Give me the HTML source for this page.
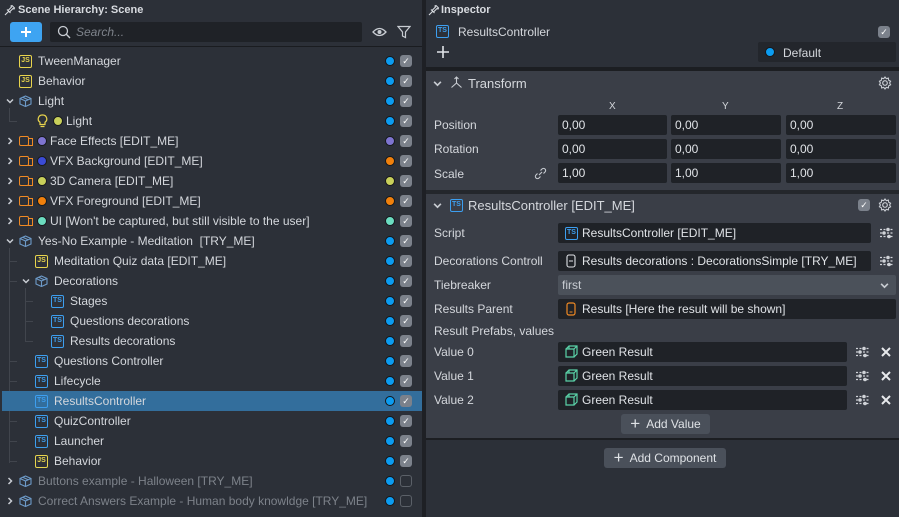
<!DOCTYPE html>
<html><head><meta charset="utf-8"><style>
*{box-sizing:border-box;margin:0;padding:0}
body{width:899px;height:517px;overflow:hidden;background:#1e2025;font-family:"Liberation Sans",sans-serif;font-size:12px;color:#d4d7dc;position:relative}
.a{position:absolute}
.lp{left:0;top:0;width:422px;height:517px;background:#2c3038}
.row{position:absolute;left:0;width:422px;height:20px;line-height:20px;white-space:nowrap}
.row .t{position:absolute;top:0}
.ic{position:absolute;top:4px;width:13px;height:13px;border:1.2px solid;border-radius:2px;font-size:7px;line-height:10px;text-align:center;font-weight:bold}
.js{border-color:#e8d44d;color:#e8d44d}
.ts{border-color:#3d9ff0;color:#3d9ff0}
.arr{position:absolute;top:6px;width:8px;height:8px}
.dot{position:absolute;top:5px;width:10px;height:10px;border-radius:50%;border:1px solid #15171b}
.bd{left:385px;background:#0c9cf0}
.cb{position:absolute;left:400px;top:4px;width:12px;height:12px;border-radius:3px;background:#7b818b;color:#fff;font-size:9px;line-height:12px;text-align:center}
.cbo{background:none;border:1.5px solid #5b6068}
.cam{position:absolute;top:5px;width:10px;height:10px;border:1.3px solid #f08a24;border-radius:2px}
.cam:after{content:"";position:absolute;left:8px;top:1px;width:4px;height:6px;border:1.3px solid #f08a24;border-left:none}
.grp{position:absolute;top:4px;width:13px;height:12px}
.ln{position:absolute;background:#41454d}
.in{position:absolute;background:#1f2227;height:20px;line-height:20px;padding-left:4px;border-radius:2px;white-space:nowrap;color:#e0e3e7}
.lbl{position:absolute;white-space:nowrap;color:#d4d7dc}
.btn{position:absolute;background:#4a505a;border-radius:3px;height:20px;line-height:20px;color:#dfe2e6;text-align:center}
</style></head><body>
<svg width="0" height="0" style="position:absolute"><defs>
<symbol id="grp" viewBox="0 0 13 12"><path d="M6.5 1 L12 3.5 V9 L6.5 11.5 L1 9 V3.5 Z M1 3.5 L6.5 6 L12 3.5 M6.5 6 V11.5 M3.7 2.2 L9.2 4.7" fill="none" stroke="#6d9ac8" stroke-width="1.1"/></symbol>
<symbol id="gear" viewBox="0 0 14 14"><circle cx="7" cy="7" r="2.3" fill="none" stroke="#c8ccd2" stroke-width="1.2"/><path d="M7 1 L8.3 2.6 L10.4 2.1 L10.6 4.2 L12.6 5.2 L11.6 7 L12.6 8.8 L10.6 9.8 L10.4 11.9 L8.3 11.4 L7 13 L5.7 11.4 L3.6 11.9 L3.4 9.8 L1.4 8.8 L2.4 7 L1.4 5.2 L3.4 4.2 L3.6 2.1 L5.7 2.6 Z" fill="none" stroke="#c8ccd2" stroke-width="1.1"/></symbol>
<symbol id="sld" viewBox="0 0 16 12"><path d="M1 2.5H15M1 6H15M1 9.5H15" stroke="#d0d3d8" stroke-width="1.3" stroke-dasharray="2 1.5"/><circle cx="9" cy="2.5" r="1.8" fill="#d0d3d8"/><circle cx="5" cy="6" r="1.8" fill="#d0d3d8"/><circle cx="10" cy="9.5" r="1.8" fill="#d0d3d8"/></symbol>
<symbol id="pre" viewBox="0 0 13 13"><path d="M1 4 H9 V12 H1 Z M1 4 L4 1 H12 V9 L9 12 M9 4 L12 1 M4 1 V4" fill="none" stroke="#5ad3a8" stroke-width="1.2"/></symbol>
<symbol id="ar" viewBox="0 0 8 8"><path d="M2.5 1L5.5 4L2.5 7" fill="none" stroke="#c8ccd2" stroke-width="1.5"/></symbol>
<symbol id="ad" viewBox="0 0 8 8"><path d="M1 2.5L4 5.5L7 2.5" fill="none" stroke="#c8ccd2" stroke-width="1.5"/></symbol>
<symbol id="pin" viewBox="0 0 12 12"><path d="M1 11L4.5 7.5M3 5.5L6.5 9M4 6.5L7.5 3L7 2L8 1.5L10.5 4L10 5L9 4.5L5.5 8" fill="none" stroke="#d8dbe0" stroke-width="1.1"/></symbol>
</defs></svg>

<!-- LEFT PANEL -->
<div class="a lp"></div>
<svg class="a" style="left:4px;top:4px" width="12" height="12"><use href="#pin"/></svg>
<div class="a" style="left:18px;top:4px;font-size:11px;font-weight:bold;color:#d8dbe0">Scene Hierarchy: Scene</div>
<div class="a" style="left:10px;top:22px;width:32px;height:20px;background:#3ea4f2;border-radius:3px"></div>
<svg class="a" style="left:20px;top:26px" width="12" height="12"><path d="M6 1V11M1 6H11" stroke="#fff" stroke-width="2"/></svg>
<div class="a" style="left:50px;top:22px;width:312px;height:20px;background:#1f2227;border-radius:2px"></div>
<svg class="a" style="left:57px;top:25px" width="14" height="14"><circle cx="6" cy="6" r="4.5" fill="none" stroke="#c8ccd2" stroke-width="1.3"/><path d="M9.3 9.3L13 13" stroke="#c8ccd2" stroke-width="1.4"/></svg>
<div class="a" style="left:76px;top:25px;font-style:italic;color:#7e838b">Search...</div>
<svg class="a" style="left:372px;top:26px" width="15" height="12"><path d="M1 6 Q7.5 -1 14 6 Q7.5 13 1 6Z" fill="none" stroke="#c8ccd2" stroke-width="1.3"/><circle cx="7.5" cy="6" r="2" fill="#c8ccd2"/></svg>
<svg class="a" style="left:397px;top:25px" width="14" height="14"><path d="M1 1.5H13L8.5 7V12.5L5.5 11V7Z" fill="none" stroke="#c8ccd2" stroke-width="1.2"/></svg>
<div class="a" style="left:0;top:46px;width:422px;height:1px;background:#1a1c20"></div>

<!-- tree lines -->
<div class="ln" style="left:9px;top:108px;width:1px;height:14px"></div><div class="ln" style="left:9px;top:121px;width:8px;height:1px"></div>
<div class="ln" style="left:9px;top:248px;width:1px;height:215px"></div>
<div class="ln" style="left:10px;top:261px;width:7px;height:1px"></div>
<div class="ln" style="left:10px;top:281px;width:7px;height:1px"></div>
<div class="ln" style="left:25px;top:288px;width:1px;height:54px"></div>
<div class="ln" style="left:26px;top:301px;width:7px;height:1px"></div>
<div class="ln" style="left:26px;top:321px;width:7px;height:1px"></div>
<div class="ln" style="left:26px;top:341px;width:7px;height:1px"></div>
<div class="ln" style="left:10px;top:361px;width:7px;height:1px"></div>
<div class="ln" style="left:10px;top:381px;width:7px;height:1px"></div>
<div class="ln" style="left:10px;top:421px;width:7px;height:1px"></div>
<div class="ln" style="left:10px;top:441px;width:7px;height:1px"></div>
<div class="ln" style="left:9px;top:461px;width:8px;height:1px"></div>

<div class="row" style="top:51px"><div class="ic js" style="left:19px">JS</div><span class="t" style="left:38px">TweenManager</span><div class="dot bd"></div><div class="cb">✓</div></div>
<div class="row" style="top:71px"><div class="ic js" style="left:19px">JS</div><span class="t" style="left:38px">Behavior</span><div class="dot bd"></div><div class="cb">✓</div></div>
<div class="row" style="top:91px"><svg class="arr" style="left:6px"><use href="#ad"/></svg><svg class="grp" style="left:19px"><use href="#grp"/></svg><span class="t" style="left:38px">Light</span><div class="dot bd"></div><div class="cb">✓</div></div>
<div class="row" style="top:111px"><svg class="a" style="left:37px;top:3px" width="11" height="14"><path d="M5.5 1A4 4 0 0 0 3 8.3V10.5H8V8.3A4 4 0 0 0 5.5 1ZM3.5 12.5H7.5" fill="none" stroke="#e8d44d" stroke-width="1.2"/></svg><div class="dot" style="left:53px;background:#c8cf5a"></div><span class="t" style="left:66px">Light</span><div class="dot bd"></div><div class="cb">✓</div></div>
<div class="row" style="top:131px"><svg class="arr" style="left:6px"><use href="#ar"/></svg><div class="cam" style="left:19px"></div><div class="dot" style="left:37px;background:#7e74d0"></div><span class="t" style="left:50px">Face Effects [EDIT_ME]</span><div class="dot bd" style="background:#7e74d0"></div><div class="cb">✓</div></div>
<div class="row" style="top:151px"><svg class="arr" style="left:6px"><use href="#ar"/></svg><div class="cam" style="left:19px"></div><div class="dot" style="left:37px;background:#3b4bd6"></div><span class="t" style="left:50px">VFX Background [EDIT_ME]</span><div class="dot bd" style="background:#f0800c"></div><div class="cb">✓</div></div>
<div class="row" style="top:171px"><svg class="arr" style="left:6px"><use href="#ar"/></svg><div class="cam" style="left:19px"></div><div class="dot" style="left:37px;background:#c8cf5a"></div><span class="t" style="left:50px">3D Camera [EDIT_ME]</span><div class="dot bd" style="background:#c8cf5a"></div><div class="cb">✓</div></div>
<div class="row" style="top:191px"><svg class="arr" style="left:6px"><use href="#ar"/></svg><div class="cam" style="left:19px"></div><div class="dot" style="left:37px;background:#f0800c"></div><span class="t" style="left:50px">VFX Foreground [EDIT_ME]</span><div class="dot bd" style="background:#f0800c"></div><div class="cb">✓</div></div>
<div class="row" style="top:211px"><svg class="arr" style="left:6px"><use href="#ar"/></svg><div class="cam" style="left:19px"></div><div class="dot" style="left:37px;background:#6bdcc0"></div><span class="t" style="left:50px">UI [Won't be captured, but still visible to the user]</span><div class="dot bd" style="background:#6bdcc0"></div><div class="cb">✓</div></div>
<div class="row" style="top:231px"><svg class="arr" style="left:6px"><use href="#ad"/></svg><svg class="grp" style="left:19px"><use href="#grp"/></svg><span class="t" style="left:38px">Yes-No Example - Meditation&nbsp; [TRY_ME]</span><div class="dot bd"></div><div class="cb">✓</div></div>
<div class="row" style="top:251px"><div class="ic js" style="left:35px">JS</div><span class="t" style="left:54px">Meditation Quiz data [EDIT_ME]</span><div class="dot bd"></div><div class="cb">✓</div></div>
<div class="row" style="top:271px"><svg class="arr" style="left:22px"><use href="#ad"/></svg><svg class="grp" style="left:35px"><use href="#grp"/></svg><span class="t" style="left:54px">Decorations</span><div class="dot bd"></div><div class="cb">✓</div></div>
<div class="row" style="top:291px"><div class="ic ts" style="left:51px">TS</div><span class="t" style="left:70px">Stages</span><div class="dot bd"></div><div class="cb">✓</div></div>
<div class="row" style="top:311px"><div class="ic ts" style="left:51px">TS</div><span class="t" style="left:70px">Questions decorations</span><div class="dot bd"></div><div class="cb">✓</div></div>
<div class="row" style="top:331px"><div class="ic ts" style="left:51px">TS</div><span class="t" style="left:70px">Results decorations</span><div class="dot bd"></div><div class="cb">✓</div></div>
<div class="row" style="top:351px"><div class="ic ts" style="left:35px">TS</div><span class="t" style="left:54px">Questions Controller</span><div class="dot bd"></div><div class="cb">✓</div></div>
<div class="row" style="top:371px"><div class="ic ts" style="left:35px">TS</div><span class="t" style="left:54px">Lifecycle</span><div class="dot bd"></div><div class="cb">✓</div></div>
<div class="row" style="top:391px;left:2px;width:420px;background:#336e9c"><div class="ic ts" style="left:33px">TS</div><span class="t" style="left:52px">ResultsController</span><div class="dot bd" style="left:383px"></div><div class="cb" style="left:398px">✓</div></div>
<div class="row" style="top:411px"><div class="ic ts" style="left:35px">TS</div><span class="t" style="left:54px">QuizController</span><div class="dot bd"></div><div class="cb">✓</div></div>
<div class="row" style="top:431px"><div class="ic ts" style="left:35px">TS</div><span class="t" style="left:54px">Launcher</span><div class="dot bd"></div><div class="cb">✓</div></div>
<div class="row" style="top:451px"><div class="ic js" style="left:35px">JS</div><span class="t" style="left:54px">Behavior</span><div class="dot bd"></div><div class="cb">✓</div></div>
<div class="row" style="top:471px;color:#7d828a"><svg class="arr" style="left:6px"><use href="#ar"/></svg><svg class="grp" style="left:19px"><use href="#grp"/></svg><span class="t" style="left:38px">Buttons example - Halloween [TRY_ME]</span><div class="dot bd"></div><div class="cb cbo"></div></div>
<div class="row" style="top:491px;color:#7d828a"><svg class="arr" style="left:6px"><use href="#ar"/></svg><svg class="grp" style="left:19px"><use href="#grp"/></svg><span class="t" style="left:38px">Correct Answers Example - Human body knowldge [TRY_ME]</span><div class="dot bd"></div><div class="cb cbo"></div></div>

<!-- INSPECTOR -->
<div class="a" style="left:426px;top:0;width:473px;height:67px;background:#2c3038"></div>
<svg class="a" style="left:428px;top:4px" width="12" height="12"><use href="#pin"/></svg>
<div class="a" style="left:441px;top:4px;font-size:11px;font-weight:bold;color:#d8dbe0">Inspector</div>
<div class="ic ts" style="left:436px;top:25px">TS</div>
<div class="a" style="left:458px;top:25px">ResultsController</div>
<div class="cb" style="left:878px;top:26px">✓</div>
<svg class="a" style="left:437px;top:46px" width="12" height="12"><path d="M6 0V12M0 6H12" stroke="#e0e3e7" stroke-width="1.6"/></svg>
<div class="a" style="left:758px;top:42px;width:138px;height:20px;background:#23262c;border-radius:2px"></div>
<div class="dot" style="left:765px;top:47px;background:#0c9cf0"></div>
<div class="a" style="left:783px;top:46px">Default</div>
<div class="a" style="left:426px;top:67px;width:473px;height:4px;background:#1c1e22"></div>

<!-- transform -->
<div class="a" style="left:426px;top:71px;width:473px;height:119px;background:#3a3e47"></div>
<svg class="a" style="left:433px;top:79px" width="9" height="9"><use href="#ad"/></svg>
<svg class="a" style="left:450px;top:76px" width="13" height="13"><path d="M6.5 1V7M6.5 7L1.5 11.5M6.5 7L11.5 11.5M4.5 3L6.5 1L8.5 3" fill="none" stroke="#c8ccd2" stroke-width="1.1"/></svg>
<div class="a" style="left:468px;top:76px;font-size:13px">Transform</div>
<svg class="a" style="left:878px;top:76px" width="14" height="14"><use href="#gear"/></svg>
<div class="a" style="left:609px;top:101px;font-size:10px">X</div>
<div class="a" style="left:722px;top:101px;font-size:10px">Y</div>
<div class="a" style="left:837px;top:101px;font-size:10px">Z</div>
<div class="lbl" style="left:434px;top:118px">Position</div>
<div class="lbl" style="left:434px;top:142px">Rotation</div>
<div class="lbl" style="left:434px;top:167px">Scale</div>
<svg class="a" style="left:534px;top:167px" width="13" height="13"><path d="M5 8L8 5M3.5 6.5L2 8A2.1 2.1 0 0 0 5 11L6.5 9.5M6.5 3.5L8 2A2.1 2.1 0 0 1 11 5L9.5 6.5" fill="none" stroke="#c8ccd2" stroke-width="1.1"/></svg>
<div class="in" style="left:558px;top:115px;width:109px">0,00</div><div class="in" style="left:671px;top:115px;width:110px">0,00</div><div class="in" style="left:786px;top:115px;width:110px">0,00</div>
<div class="in" style="left:558px;top:139px;width:109px">0,00</div><div class="in" style="left:671px;top:139px;width:110px">0,00</div><div class="in" style="left:786px;top:139px;width:110px">0,00</div>
<div class="in" style="left:558px;top:163px;width:109px">1,00</div><div class="in" style="left:671px;top:163px;width:110px">1,00</div><div class="in" style="left:786px;top:163px;width:110px">1,00</div>
<div class="a" style="left:426px;top:190px;width:473px;height:4px;background:#24272c"></div>

<!-- results controller -->
<div class="a" style="left:426px;top:194px;width:473px;height:244px;background:#3a3e47"></div>
<svg class="a" style="left:433px;top:201px" width="9" height="9"><use href="#ad"/></svg>
<div class="ic ts" style="left:450px;top:199px">TS</div>
<div class="a" style="left:468px;top:198px;font-size:13px">ResultsController [EDIT_ME]</div>
<div class="cb" style="left:858px;top:199px">✓</div>
<svg class="a" style="left:878px;top:198px" width="14" height="14"><use href="#gear"/></svg>

<div class="lbl" style="left:434px;top:226px">Script</div>
<div class="in" style="left:558px;top:223px;width:313px;padding-left:24px">ResultsController [EDIT_ME]</div>
<div class="ic ts" style="left:565px;top:227px">TS</div>
<svg class="a" style="left:879px;top:227px" width="16" height="12"><use href="#sld"/></svg>

<div class="lbl" style="left:434px;top:254px">Decorations Controll</div>
<div class="in" style="left:558px;top:251px;width:313px;padding-left:24px">Results decorations : DecorationsSimple [TRY_ME]</div>
<svg class="a" style="left:566px;top:254px" width="10" height="14"><rect x="1" y="1" width="8" height="12" rx="2" fill="none" stroke="#e0e3e7" stroke-width="1.1"/><path d="M3 7H7" stroke="#e0e3e7"/></svg>
<svg class="a" style="left:879px;top:255px" width="16" height="12"><use href="#sld"/></svg>

<div class="lbl" style="left:434px;top:278px">Tiebreaker</div>
<div class="in" style="left:558px;top:275px;width:338px;background:#4b515a;color:#c8ccd2">first</div>
<svg class="a" style="left:880px;top:281px" width="9" height="9"><use href="#ad"/></svg>

<div class="lbl" style="left:434px;top:302px">Results Parent</div>
<div class="in" style="left:558px;top:299px;width:338px;padding-left:24px">Results [Here the result will be shown]</div>
<svg class="a" style="left:566px;top:302px" width="10" height="14"><rect x="1" y="1" width="8" height="12" rx="2" fill="none" stroke="#f08a24" stroke-width="1.2"/><path d="M3.5 10H6.5" stroke="#f08a24"/></svg>

<div class="lbl" style="left:434px;top:324px">Result Prefabs, values</div>
<div class="lbl" style="left:434px;top:345px">Value 0</div>
<div class="lbl" style="left:434px;top:369px">Value 1</div>
<div class="lbl" style="left:434px;top:393px">Value 2</div>
<div class="in" style="left:558px;top:342px;width:289px;padding-left:24px">Green Result</div>
<div class="in" style="left:558px;top:366px;width:289px;padding-left:24px">Green Result</div>
<div class="in" style="left:558px;top:390px;width:289px;padding-left:24px">Green Result</div>
<svg class="a" style="left:565px;top:345px" width="13" height="13"><use href="#pre"/></svg>
<svg class="a" style="left:565px;top:369px" width="13" height="13"><use href="#pre"/></svg>
<svg class="a" style="left:565px;top:393px" width="13" height="13"><use href="#pre"/></svg>
<svg class="a" style="left:855px;top:346px" width="16" height="12"><use href="#sld"/></svg>
<svg class="a" style="left:855px;top:370px" width="16" height="12"><use href="#sld"/></svg>
<svg class="a" style="left:855px;top:394px" width="16" height="12"><use href="#sld"/></svg>
<svg class="a" style="left:881px;top:347px" width="10" height="10"><path d="M1 1L9 9M9 1L1 9" stroke="#e7e9ec" stroke-width="2"/></svg>
<svg class="a" style="left:881px;top:371px" width="10" height="10"><path d="M1 1L9 9M9 1L1 9" stroke="#e7e9ec" stroke-width="2"/></svg>
<svg class="a" style="left:881px;top:395px" width="10" height="10"><path d="M1 1L9 9M9 1L1 9" stroke="#e7e9ec" stroke-width="2"/></svg>

<div class="btn" style="left:621px;top:414px;width:89px"><span style="font-size:17px;vertical-align:-1px">+</span>&nbsp; Add Value</div>
<div class="a" style="left:426px;top:438px;width:473px;height:2px;background:#1c1e22"></div>
<div class="a" style="left:426px;top:440px;width:473px;height:77px;background:#2c3038"></div>
<div class="btn" style="left:604px;top:448px;width:122px"><span style="font-size:17px;vertical-align:-1px">+</span>&nbsp; Add Component</div>
</body></html>
